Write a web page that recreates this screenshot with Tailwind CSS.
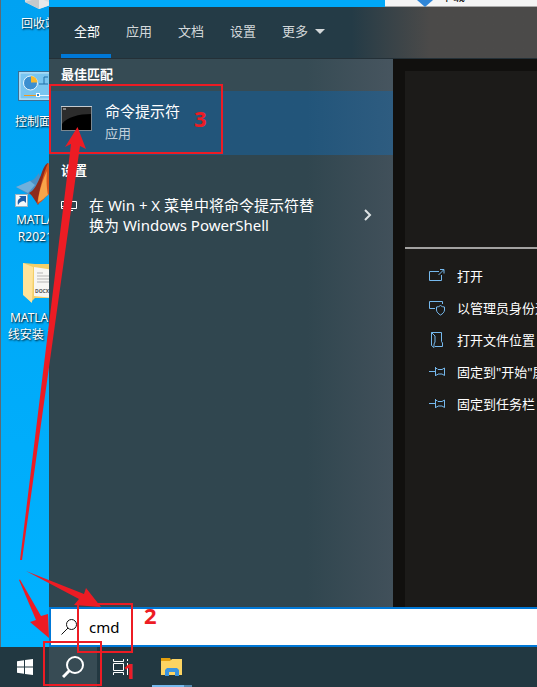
<!DOCTYPE html>
<html lang="zh-CN">
<head>
    <meta charset="UTF-8">
    <meta name="viewport" content="width=device-width, initial-scale=1.0">
    <title>命令提示符</title>
    <script src="https://cdn.jsdelivr.net/npm/@tailwindcss/browser@4"></script>
</head>
<body class="relative h-screen flex flex-col overflow-hidden bg-[#00a8f8] text-white text-[13px] font-['Noto_Sans','Noto_Sans_CJK_SC',sans-serif]">
    <main class="flex-1 min-h-0 flex">
        <!-- desktop -->
        <aside class="w-[49px] shrink-0 overflow-hidden border-l border-[#5c6b75] bg-linear-to-b from-[#00a2f2] to-[#00b2ff]">
            <ul class="-mt-9 w-[76px] text-xs leading-[17px] text-center [text-shadow:1px_1px_2px_#000]">
                <li class="h-[98px] flex flex-col items-center gap-[3px]">
                    <svg class="size-12 shrink-0" viewBox="0 0 48 48">
                        <path d="M8 6l16-4 16 4-2 34-14 5-14-7z" fill="#d9dde0"/>
                        <path d="M10 38l14-4v11z" fill="#c4c9cc"/>
                        <path d="M24 34l14 6-14 5z" fill="#e6e9ea"/>
                    </svg>
                    <span>回收站</span>
                </li>
                <li class="h-[98px] flex flex-col items-center gap-[3px]">
                    <svg class="size-12 shrink-0" viewBox="0 0 48 48">
                        <rect x="3.500" y="9.500" width="41" height="29" fill="#8fd0f4" stroke="#3c6f94"/>
                        <rect x="5" y="11" width="38" height="26" fill="#79c5f0" stroke="#b9e4fa"/>
                        <circle cx="15.500" cy="21" r="7" fill="#3b8fd0" stroke="#e8f6fd"/>
                        <path d="M16 20.500v-6.500a6.500 6.500 0 0 1 6.500 6.500z" fill="#fbb92b"/>
                        <path d="M24 22h5v-7h4M29 22h4" stroke="#1f6fa8" fill="none"/>
                        <path d="M34 13h5v4h-5zM34 20h5v4h-5z" fill="#e8f6fd"/>
                        <path d="M9 33.500h13" stroke="#f39a1e"/>
                        <path d="M22 33.500h20" stroke="#e8f6fd"/>
                        <rect x="21.500" y="31.500" width="3" height="3" fill="#2f88cc" stroke="#fff"/>
                    </svg>
                    <span>控制面板</span>
                </li>
                <li class="h-[98px] flex flex-col items-center gap-[3px]">
                    <svg class="size-12 shrink-0" viewBox="0 0 48 48">
                        <path d="M1 27l14-6c4-1 6-4 9-8l2 8-12 14z" fill="#4c8fc4"/>
                        <path d="M1 27l14-6 5 4-7 8z" fill="#6fb0dc"/>
                        <path d="M14 33c6-3 8-9 12-18 2-6 4-11 7-12l2 20-12 22c-3-4-5-9-9-12z" fill="#8e2a1c"/>
                        <path d="M22 44c2-12 6-30 11-41 5 3 9 24 14 32-6-3-10-4-14 0-4 3-6 8-11 9z" fill="#d9551c"/>
                        <path d="M23 42c1-11 5-23 9-31-1 10 0 19 1 24-3 2-6 6-10 7z" fill="#f8a54a"/>
                        <rect x=".5" y="34.500" width="12" height="12" fill="#f4f8fb" stroke="#9fb4c2"/>
                        <path d="M3 45c-1-5 1-7 3-7L4 36h7v7l-2-2c-3 0-4 1-6 4z" fill="#1f5fa8"/>
                    </svg>
                    <span>MATLAB<br>R2021b</span>
                </li>
                <li class="h-[98px] flex flex-col items-center gap-[3px]">
                    <svg class="size-12 shrink-0" viewBox="0 0 48 48">
                        <path d="M8 5l12 1h22v34H20l-4 4-8-8z" fill="#f3cf68"/>
                        <path d="M19 9l20 3v28l-20-2z" fill="#f6f6f4"/>
                        <path d="M22 15h6M22 18h14M22 21h14M22 24h14" stroke="#b5b5b5"/>
                        <text x="20" y="35" font-size="5" font-weight="700" fill="#555" class="[text-shadow:none]">DOCX</text>
                        <path d="M8 5l10 4v5l-1 31-9-8z" fill="#ffe39a"/>
                    </svg>
                    <span class="w-20 whitespace-nowrap">MATLAB在<br>线安装 USB</span>
                </li>
            </ul>
        </aside>

        <div class="flex-1 min-w-0 flex flex-col">
            <!-- window behind the menu -->
            <div class="h-[7px] shrink-0 flex overflow-hidden">
                <div class="w-[336px] shrink-0"></div>
                <div class="flex-1 flex bg-[#f4f4f4] pl-8 gap-2 border-b border-[#aaa] text-black text-xs">
                    <svg class="w-4 h-[7px]" viewBox="0 0 16 7"><path d="M0 0h16L8 7z" fill="#2f86d8"/></svg>
                    <span class="-mt-[11px] leading-4">下载</span>
                </div>
            </div>

            <nav class="h-[52px] shrink-0 flex px-3 bg-linear-to-r from-[#243b46] from-62% to-[#4b4a49] to-78% border-b border-[#243037] text-[#d3d8da]">
                <button class="w-[52px] shrink-0 pb-0.5 relative text-white">全部<span class="absolute left-0 bottom-0 w-[50px] h-1 bg-[#0078d7]"></span></button>
                <button class="w-[52px] shrink-0 pb-0.5">应用</button>
                <button class="w-[52px] shrink-0 pb-0.5">文档</button>
                <button class="w-[52px] shrink-0 pb-0.5">设置</button>
                <button class="shrink-0 pl-[13px] pb-0.5 flex items-center gap-[7px]">更多
                    <svg class="w-[10px] h-[5px]" viewBox="0 0 10 5"><path d="M0 0h10L5 5z" fill="currentColor"/></svg>
                </button>
            </nav>

            <div class="flex-1 min-h-0 flex">
                <section class="w-[344px] shrink-0 bg-linear-to-r from-[#30464f] from-75% to-[#41505a]">
                    <h2 class="h-8 px-3 flex items-center font-bold bg-white/3">最佳匹配</h2>
                    <a href="#" class="h-16 px-3 pb-1 flex items-center gap-3 bg-linear-to-r from-[#22557a] from-75% to-[#2e5c80]">
                        <svg class="w-8 h-[26px] -mt-1" viewBox="0 0 32 26">
                            <rect x=".5" y=".5" width="30" height="24" fill="#000" stroke="#7c8890"/>
                            <path d="M1 1h29v7C18 8 6 11 1 18z" fill="#2c2c2c"/>
                            <path d="M2 3h3" stroke="#ddd"/>
                            <path d="M0 .5h31" stroke="#c5cbd0"/>
                        </svg>
                        <span class="flex flex-col">
                            <span class="text-[15px] leading-6">命令提示符</span>
                            <span class="text-[#c3d1dc] leading-5">应用</span>
                        </span>
                    </a>
                    <h2 class="h-8 px-3 flex items-center font-bold">设置</h2>
                    <a href="#" class="px-3 py-2 flex gap-3">
                        <svg class="w-4 h-4 mt-[3px] shrink-0" viewBox="0 0 16 16" fill="none" stroke="#fff">
                            <path d="M.5 3.500h15v7H.5zM8.500 3.500v7M0 8.500h4M4 12.500h8"/>
                        </svg>
                        <span class="flex-1 text-[15px] leading-5 whitespace-nowrap">在 Win + X 菜单中将命令提示符替<br>换为 Windows PowerShell</span>
                        <svg class="w-2 h-3 mr-[9px] self-center" viewBox="0 0 8 12"><path d="M1 1l5 5-5 5" fill="none" stroke="#dde2e4" stroke-width="2"/></svg>
                    </a>
                </section>

                <section class="flex-1 min-w-0 pl-3 pt-3 bg-[#11100e]">
                    <div class="h-full bg-[#1c1b19] overflow-hidden">
                        <div class="h-[178px] border-b-2 border-[#a3a2a1]"></div>
                        <ul class="pt-[11px] pl-6 leading-8 whitespace-nowrap">
                            <li><a href="#" class="flex items-center gap-3">
                                <svg class="size-4 shrink-0" viewBox="0 0 16 16" fill="none" stroke="#76b9ed"><path d="M10 3.500H.5v9h12V7M9.500 7l5-5M11 1.500h4v4"/></svg>打开</a></li>
                            <li><a href="#" class="flex items-center gap-3">
                                <svg class="size-4 shrink-0" viewBox="0 0 16 16" fill="none" stroke="#76b9ed"><path d="M6 8.500H.5v-7h13V4M11.500 5.500c1 1 2.500 1.500 4 1.500v3c0 2-2 4-4 5-2-1-4-3-4-5V7c1.500 0 3-.5 4-1.500z"/></svg>以管理员身份运行</a></li>
                            <li><a href="#" class="flex items-center gap-3">
                                <svg class="size-4 shrink-0" viewBox="0 0 16 16" fill="none" stroke="#76b9ed"><path d="M2.500.5h10v9l1 1.500v3.500H6M2.500.5v13L5 15.500V12l1-2V4z"/></svg>打开文件位置</a></li>
                            <li><a href="#" class="flex items-center gap-3">
                                <svg class="size-4 shrink-0" viewBox="0 0 16 16" fill="none" stroke="#76b9ed"><path d="M0 7.500h6.500M6.500 3v9M6.500 4.500h1.500l1 1h4l2.500-1.500v7.500L13 10H9l-1 1H6.500"/></svg>固定到"开始"屏幕</a></li>
                            <li><a href="#" class="flex items-center gap-3">
                                <svg class="size-4 shrink-0" viewBox="0 0 16 16" fill="none" stroke="#76b9ed"><path d="M0 7.500h6.500M6.500 3v9M6.500 4.500h1.500l1 1h4l2.500-1.500v7.500L13 10H9l-1 1H6.500"/></svg>固定到任务栏</a></li>
                        </ul>
                    </div>
                </section>
            </div>

            <label class="h-10 shrink-0 flex items-center gap-3 pl-[10px] bg-white border-y-2 border-l-2 border-[#0078d7]">
                <svg class="size-4 shrink-0" viewBox="0 0 16 16" fill="none" stroke="#111"><circle cx="10.500" cy="5.500" r="5"/><path d="M7 9l-6.500 6.500"/></svg>
                <input type="text" value="cmd" aria-label="搜索" class="flex-1 min-w-0 text-[15px] text-black outline-none">
            </label>
        </div>
    </main>

    <footer class="h-10 shrink-0 flex pl-px bg-[#223841]">
        <button aria-label="开始" class="w-12 flex items-center justify-center">
            <svg class="size-4" viewBox="0 0 16 16" fill="#fff"><path d="M0 2.200L7 1.200v6.300H0zM8 1l8-1v7.500H8zM0 8.500h7v6.300l-7-1zM8 8.500h8V16l-8-1z"/></svg>
        </button>
        <button aria-label="搜索" class="w-12 flex items-center justify-center bg-[#374b54]">
            <svg class="size-[22px]" viewBox="0 0 22 22" fill="none" stroke="#fff" stroke-width="2"><circle cx="13" cy="9" r="8"/><path d="M7.500 14.500L1 21" stroke-width="3"/></svg>
        </button>
        <button aria-label="任务视图" class="w-12 flex items-center justify-center">
            <svg class="size-4" viewBox="0 0 16 16" fill="none" stroke="#fff"><path d="M.5 0v2.500h10V0M.5 4.500h10v7H.5zM.5 16v-2.500h10V16M14.500 0v2M14.500 4v12"/></svg>
        </button>
        <button aria-label="文件资源管理器" class="relative w-12 ml-[3px] flex items-center justify-center">
            <svg class="w-[22px] h-[18px]" viewBox="0 0 22 18">
                <path d="M0 0h9l1 2h11v4H0z" fill="#e5a00d"/>
                <path d="M0 3h9l2-2h10v16H0z" fill="#fcd462"/>
                <path d="M4 18v-6l2-2h10l2 2v6h-4v-4H8v4z" fill="#3a94e0"/>
            </svg>
            <span class="absolute bottom-0 left-1 flex w-10 h-[2px] bg-[#5488ae]"><span class="w-8 bg-[#76b9ed]"></span></span>
        </button>
    </footer>

    <!-- step markers -->
    <svg class="absolute left-0 top-0 w-[240px] h-[687px] pointer-events-none font-bold" viewBox="0 0 240 687" fill="#ed1c24">
        <g fill="none" stroke="#ed1c24" stroke-width="2">
            <rect x="50" y="85" width="172" height="68"/>
            <rect x="78" y="604" width="54" height="48"/>
            <rect x="44" y="642" width="57" height="43"/>
        </g>
        <path d="M77.500 127L86 149l-6-3L22 560h-2L71 144l-6 3z"/>
        <path d="M26 571l58 23 2-6 15 19-27-2 5-6z"/>
        <path d="M19 580l1-.5L41 616l7-2 1 24-19-16 6-2z"/>
        <text x="194" y="127" font-size="22">3</text>
        <text x="144" y="624" font-size="22">2</text>
        <text x="123" y="679" font-size="22">1</text>
    </svg>
</body>
</html>
